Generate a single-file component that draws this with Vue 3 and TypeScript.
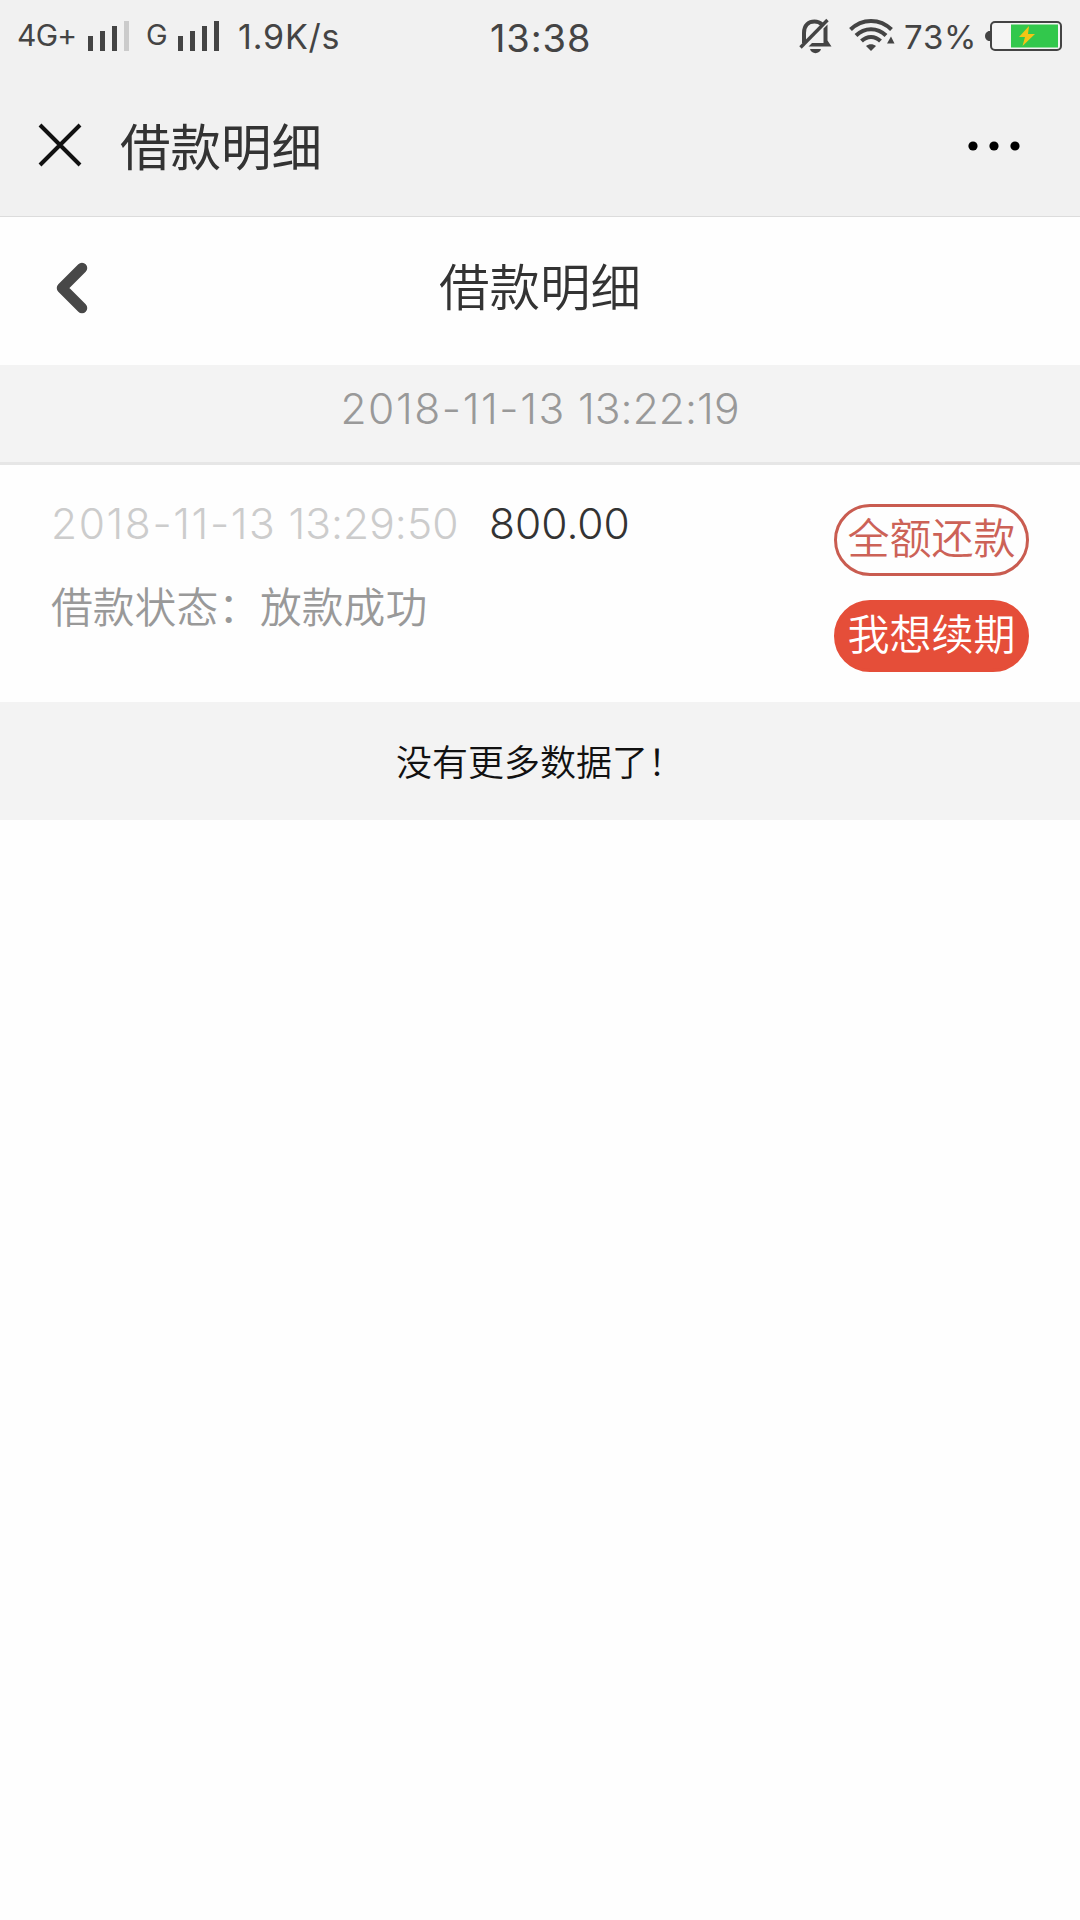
<script setup lang="ts">
interface LoanRecord {
  day: string
  time: string
  amount: string
  status: string
}

const title = '借款明细'
const created = { day: '2018-11-13', time: '13:22:19' }
const records: LoanRecord[] = [
  { day: '2018-11-13', time: '13:29:50', amount: '800.00', status: '放款成功' },
]
const bars = [15, 20, 25, 30]
</script>

<template>
  <div class="screen">
    <div class="top">
      <div class="status">
        <div class="side">
          <span class="net net-4g">4G+</span>
          <svg class="signal" width="42" height="30" viewBox="0 0 42 30">
            <rect v-for="(h, i) in bars" :key="h" :x="i * 12" :y="30 - h" width="5" :height="h" :fill="i === 3 ? '#cbcbcb' : '#444'" />
          </svg>
          <span class="net net-g">G</span>
          <svg class="signal" width="42" height="30" viewBox="0 0 42 30">
            <rect v-for="(h, i) in bars" :key="h" :x="i * 12" :y="30 - h" width="5" :height="h" fill="#444" />
          </svg>
          <span class="speed">1.9K/s</span>
        </div>
        <span class="clock">13:38</span>
        <div class="side right">
          <svg class="bell" width="34" height="36" viewBox="0 0 34 36" fill="none" stroke="#444">
            <path d="M5 25V15C5 7 10 3.500 15.500 3.500C18.500 3.500 21 4.500 23 6.500" stroke-width="4" />
            <path d="M1.500 29.500L28.500 2" stroke-width="3.400" />
            <path d="M24.500 10.500L28.500 6.500V22.500L32.500 28.500H9.500L13 25H24.500Z" fill="#444" stroke="none" />
            <path d="M11 31H22C21 36.500 12 36.500 11 31Z" fill="#444" stroke="none" />
          </svg>
          <svg class="wifi" width="46" height="34" viewBox="0 0 46 34" fill="none" stroke="#444" stroke-width="4">
            <path d="M1.500 11.500C13 0 31 0 42.500 11.500" />
            <path d="M7 17.500C15.500 9 28.500 9 37 17.500" />
            <path d="M12.500 23C18 17.500 26 17.500 31.500 23" />
            <path d="M17 28C20 25.500 24 25.500 27 28L22 33Z" fill="#444" stroke="none" />
            <path d="M42 18.500L45.500 25.500H38Z" fill="#444" stroke="none" />
          </svg>
          <span class="percent">73%</span>
          <svg class="battery" width="77" height="30" viewBox="0 0 77 30">
            <path d="M5 10H3.500Q0 11.500 0 15T3.500 20H5Z" fill="#444" />
            <rect x="6" y="1" width="70" height="28" rx="4" fill="#f5f5f5" stroke="#444" stroke-width="2" />
            <rect x="26" y="3.500" width="47" height="23" fill="#32c84c" />
            <path d="M44 5L34 16H40L37.500 25L50 13H43Z" fill="#f3c516" />
          </svg>
        </div>
      </div>
      <div class="webbar">
        <svg class="close" width="44" height="44" viewBox="0 0 44 44" stroke="#111" stroke-width="4">
          <path d="M2 2L42 42M42 2L2 42" />
        </svg>
        <span class="web-title">{{ title }}</span>
        <svg class="more" width="52" height="10" viewBox="0 0 52 10" fill="#000">
          <circle cx="5" cy="5" r="4.600" />
          <circle cx="26" cy="5" r="4.600" />
          <circle cx="47" cy="5" r="4.600" />
        </svg>
      </div>
    </div>

    <header class="head">
      <svg class="back" width="32" height="52" viewBox="0 0 32 52" fill="none" stroke="#484848" stroke-width="10.500" stroke-linecap="round" stroke-linejoin="round">
        <path d="M26 6L6 26L26 46" />
      </svg>
      <h1>{{ title }}</h1>
    </header>

    <div class="date"><span class="day">{{ created.day }}</span> {{ created.time }}</div>

    <section v-for="r in records" :key="r.time" class="record">
      <div class="info">
        <div class="line">
          <span class="time"><span class="day">{{ r.day }}</span> {{ r.time }}</span>
          <span class="amount">{{ r.amount }}</span>
        </div>
        <div class="state">借款状态：{{ r.status }}</div>
      </div>
      <div class="actions">
        <button class="btn outline">全额还款</button>
        <button class="btn solid">我想续期</button>
      </div>
    </section>

    <div class="end">没有更多数据了！</div>
  </div>
</template>

<style>
body {
  margin: 0;
  background: #fefefe;
}
</style>

<style scoped>
.screen {
  width: 1080px;
  height: 1920px;
  overflow: hidden;
  background: #fefefe;
  font-family: Inter, "Noto Sans CJK SC", sans-serif;
  font-weight: 300;
  white-space: nowrap;
}
.top {
  box-sizing: border-box;
  height: 217px;
  background: #f1f1f1;
  border-bottom: 1px solid #dcdcdc;
}
.status {
  display: flex;
  height: 74px;
  color: #444;
  font-weight: 400;
}
.side {
  display: flex;
  align-items: flex-start;
  width: 490px;
  padding-left: 17px;
  box-sizing: border-box;
}
.signal {
  margin-top: 21px;
}
.net {
  font-size: 30px;
  line-height: 36px;
  margin-top: 17px;
}
.net-4g {
  width: 71px;
  letter-spacing: -0.700px;
}
.net-g {
  width: 32px;
  margin-left: 16px;
  font-size: 29px;
}
.speed {
  margin: 17px 0 0 18px;
  font-size: 34px;
  line-height: 40px;
  letter-spacing: 0.800px;
}
.clock {
  width: 100px;
  margin-top: 15px;
  font-size: 38px;
  line-height: 46px;
  letter-spacing: 0.900px;
}
.right {
  padding-left: 209px;
}
.bell {
  margin-top: 18px;
}
.wifi {
  margin: 18px 0 0 16px;
}
.percent {
  width: 71px;
  margin: 17px 0 0 9px;
  font-size: 33px;
  line-height: 40px;
  letter-spacing: 0.800px;
}
.battery {
  margin: 21px 0 0 10px;
  flex-shrink: 0;
}
.webbar {
  display: flex;
  align-items: center;
  height: 142px;
  padding: 0 60px 0 38px;
}
.close {
  margin-bottom: 1px;
}
.more {
  margin-top: 2px;
}
.web-title {
  flex: 1;
  margin: 6px 0 0 38px;
  font-size: 50.500px;
  line-height: 76px;
  font-weight: 400;
  color: #333;
}
.head {
  display: grid;
  grid-template-columns: 120px 1fr 120px;
  align-items: center;
  height: 148px;
}
.back {
  margin: -7px 0 0 56px;
}
.head h1 {
  margin: -7px 0 0;
  text-align: center;
  font-size: 50.500px;
  line-height: 76px;
  font-weight: 350;
  color: #333;
}
.date {
  box-sizing: border-box;
  height: 100px;
  padding-top: 18px;
  background: #f3f3f3;
  border-bottom: 3px solid #e6e6e6;
  text-align: center;
  font-size: 42.500px;
  line-height: 52px;
  letter-spacing: 0.100px;
  color: #999;
}
.day {
  letter-spacing: 1.600px;
}
.record {
  display: flex;
  justify-content: space-between;
  box-sizing: border-box;
  height: 237px;
  padding: 39px 51px 0;
}
.line {
  display: flex;
  height: 60px;
  margin-top: -6px;
  font-size: 42.500px;
  line-height: 52px;
}
.time {
  width: 438px;
  letter-spacing: 0.050px;
  color: #ccc;
}
.amount {
  color: #333;
}
.state {
  margin-top: 19px;
  font-size: 41.800px;
  line-height: 62px;
  font-weight: 350;
  color: #999;
}
.actions {
  display: flex;
  flex-direction: column;
  gap: 24px;
}
.btn {
  box-sizing: border-box;
  width: 195px;
  height: 72px;
  padding: 0 0 2px;
  border: 3px solid #c95c50;
  border-radius: 36px;
  background: #fefefe;
  color: #cc6257;
  font: inherit;
  font-weight: 350;
  font-size: 42px;
  line-height: 60px;
}
.solid {
  border-color: #e54e39;
  background: #e54e39;
  color: #fff;
}
.end {
  box-sizing: border-box;
  height: 118px;
  padding-top: 34px;
  background: #f3f3f3;
  text-align: center;
  font-size: 36px;
  line-height: 54px;
  font-weight: 350;
  color: #111;
}
</style>
